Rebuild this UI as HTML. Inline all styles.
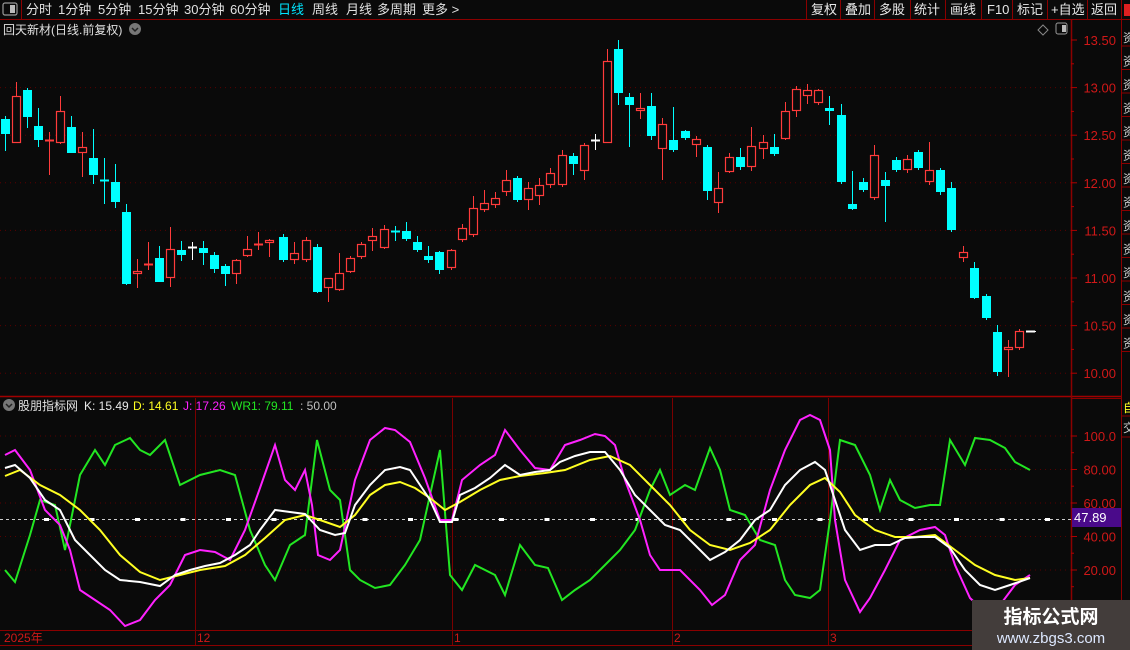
<!DOCTYPE html>
<html><head><meta charset="utf-8"><style>
*{margin:0;padding:0;box-sizing:border-box}
body{width:1130px;height:650px;background:#0a0a0a;overflow:hidden;font-family:"Liberation Sans","Noto Sans CJK SC",sans-serif;position:relative;color:#ddd}
</style></head><body>
<svg id="s" width="1130" height="650" style="position:absolute;left:0;top:0" xmlns="http://www.w3.org/2000/svg" font-family="Liberation Sans, Noto Sans CJK SC, sans-serif"></svg>
<script>
var s=document.getElementById('s'),h='';
function L(x1,y1,x2,y2,c,w,d){h+='<line x1="'+x1+'" y1="'+y1+'" x2="'+x2+'" y2="'+y2+'" stroke="'+c+'" stroke-width="'+(w||1)+'"'+(d?' stroke-dasharray="'+d+'"':'')+'/>';}
function T(x,y,t,c,sz,a){h+='<text x="'+x+'" y="'+y+'" fill="'+c+'" font-size="'+(sz||12)+'"'+(a?' text-anchor="'+a+'"':'')+'>'+t+'</text>';}
L(0,19.5,1130,19.5,'#8b0000');
L(21.5,0,21.5,19,'#8b0000');
[806,840,874,910,945,981,1012,1047,1087,1121].forEach(function(x){L(x+.5,0,x+.5,19,'#8b0000');});
L(0,396.5,1121,396.5,'#a00000',1.5);
L(1071.5,19,1071.5,650,'#8b0000',1.5);
L(1121.5,19,1121.5,650,'#8b0000');
L(1071,398.5,1121,398.5,'#8b0000');
L(0,630.5,1071,630.5,'#8b0000');
L(0,645.5,1071,645.5,'#8b0000');
var pl=['13.50','13.00','12.50','12.00','11.50','11.00','10.50','10.00'];
for(var i=0;i<8;i++){var y=40+i*47.6;if(i>0)L(0,y,1071,y,'#5a0000',1,'1 4');L(1071,y,1077,y,'#b00000');T(1116,y+5,pl[i],'#d01818',13,'end');if(i<7)L(1071,y+23.8,1074,y+23.8,'#b00000');}
var il=['100.0','80.00','60.00','40.00','20.00'];
for(i=0;i<5;i++){var y=436+i*33.5;L(0,y,1071,y,'#5a0000',1,'1 4');L(1071,y,1077,y,'#b00000');T(1116,y+5,il[i],'#d01818',13,'end');L(1071,y+16.7,1074,y+16.7,'#b00000');}
[195,452,672,828].forEach(function(x){L(x+.5,398,x+.5,645,'#7a0000');});
var C=[[5,119,134,116,151,'c'],[16,96,143,82,143,'r'],[27,90,117,88,128,'c'],[38,126,140,108,147,'c'],[49,140,141,132,175,'r'],[60,111,143,96,144,'r'],[71,127,153,116,153,'c'],[82,147,153,132,177,'r'],[93,158,175,129,184,'c'],[104,180,181,158,204,'c'],[115,182,202,164,208,'c'],[126,212,284,204,285,'c'],[137,271,274,259,288,'r'],[148,264,265,242,270,'r'],[159,258,282,246,282,'c'],[170,249,278,227,287,'r'],[181,250,255,241,261,'c'],[192,247,248,242,260,'w'],[203,248,253,241,265,'c'],[214,255,269,252,273,'c'],[225,266,274,264,286,'c'],[236,260,274,259,284,'r'],[247,249,256,236,257,'r'],[258,244,245,232,250,'r'],[269,240,243,239,257,'r'],[283,237,260,234,262,'c'],[294,253,260,242,264,'r'],[306,240,260,237,262,'r'],[317,247,292,244,293,'c'],[328,278,288,278,302,'r'],[339,273,290,253,291,'r'],[350,258,272,256,273,'r'],[361,244,257,242,259,'r'],[372,236,241,228,251,'r'],[384,229,248,225,249,'r'],[395,231,232,226,241,'c'],[406,231,239,222,241,'c'],[417,242,250,236,252,'c'],[428,256,260,246,263,'c'],[439,252,270,251,274,'c'],[451,250,268,249,270,'r'],[462,228,240,224,242,'r'],[473,208,235,196,237,'r'],[484,203,210,190,212,'r'],[495,198,205,192,208,'r'],[506,180,192,170,196,'r'],[517,178,200,176,202,'c'],[528,188,200,182,210,'r'],[539,185,196,178,205,'r'],[550,173,185,168,188,'r'],[562,155,185,150,187,'r'],[573,156,164,153,175,'c'],[584,145,171,143,180,'r'],[595,140,141,134,150,'w'],[607,61,143,49,143,'r'],[618,49,93,40,105,'c'],[629,97,105,93,147,'c'],[640,108,111,93,119,'r'],[651,106,136,93,140,'c'],[662,124,149,118,180,'r'],[673,140,150,107,152,'c'],[685,131,138,130,140,'c'],[696,139,145,136,157,'r'],[707,147,191,145,200,'c'],[718,188,203,172,213,'r'],[729,157,172,153,173,'r'],[740,157,167,148,170,'c'],[751,146,167,127,171,'r'],[763,142,149,135,159,'r'],[774,147,154,134,156,'c'],[785,111,139,102,140,'r'],[796,89,111,86,117,'r'],[807,90,96,84,104,'r'],[818,90,103,89,105,'r'],[829,108,111,96,125,'c'],[841,115,182,104,184,'c'],[852,204,209,171,210,'c'],[863,182,190,178,192,'c'],[874,155,198,145,200,'r'],[885,180,186,172,222,'c'],[896,160,170,157,172,'c'],[907,159,170,155,173,'r'],[918,152,168,150,170,'c'],[929,170,182,142,185,'r'],[940,170,192,168,195,'c'],[951,188,230,182,232,'c'],[963,252,258,246,262,'r'],[974,268,298,262,299,'c'],[986,296,318,294,320,'c'],[997,332,372,325,376,'c'],[1008,347,350,340,377,'r'],[1019,331,348,329,350,'r'],[1030,331,332,331,332,'w']];
C.forEach(function(k){var x=k[0],col=k[5]=='r'?'#ff3b3b':k[5]=='c'?'#00ffff':'#ffffff';
L(x+.5,k[3],x+.5,k[4],col);
if(k[2]-k[1]<=2){L(x-4,k[1]+.5,x+5,k[1]+.5,col,2);}
else if(k[5]=='r')h+='<rect x="'+(x-3.5)+'" y="'+(k[1]+.5)+'" width="8" height="'+(k[2]-k[1]-1)+'" fill="#0a0a0a" stroke="'+col+'" stroke-width="1.2"/>';
else h+='<rect x="'+(x-4)+'" y="'+k[1]+'" width="9" height="'+(k[2]-k[1])+'" fill="'+col+'"/>';});
L(1030,331.5,1036,331.5,'#fff');
L(0,519.5,1071,519.5,'#ccc',1,'3 3');
for(var x=46;x<1071;x+=45.5)h+='<rect x="'+(x-2)+'" y="518" width="5" height="3" fill="#fff"/>';
function P(pts,c){h+='<polyline fill="none" stroke="'+c+'" stroke-width="2" points="'+pts+'"/>';}
P('5,570 15,582 30,535 40,500 55,505 65,550 80,475 95,450 105,465 115,445 130,438 140,450 150,455 165,440 180,485 200,475 220,470 235,475 250,530 265,565 275,580 290,545 305,535 317,440 330,490 340,500 350,570 360,580 375,588 390,585 405,565 420,540 440,450 450,575 462,590 475,565 495,575 505,595 520,545 535,565 548,568 562,600 575,590 590,580 605,565 620,550 635,530 650,490 660,470 670,495 685,485 695,490 710,448 720,470 730,510 745,515 760,540 775,545 785,580 795,595 810,598 820,590 830,520 840,440 855,445 870,475 880,510 890,480 900,500 915,508 930,505 940,505 950,440 965,465 975,438 990,440 1005,448 1015,462 1030,470','#22e622');
P('5,455 15,450 30,470 45,510 60,525 70,550 80,590 95,600 110,610 125,626 140,620 155,600 170,585 185,555 200,550 215,552 230,560 245,530 260,488 275,445 285,480 295,490 305,470 312,505 318,555 330,560 340,550 355,480 370,440 385,428 395,430 410,442 425,478 440,520 452,520 462,480 480,465 495,455 505,430 520,450 535,468 550,470 565,445 580,440 595,434 605,436 615,445 625,480 640,520 650,555 660,570 680,570 700,590 712,605 725,595 740,560 755,545 770,490 785,450 800,420 810,415 820,420 830,450 835,520 845,580 860,612 870,598 885,570 900,540 920,530 935,527 945,535 955,565 970,598 985,612 1000,605 1015,585 1030,575','#ff22ff');
P('5,476 20,470 40,485 60,495 80,510 100,530 120,555 140,572 160,580 180,575 200,570 225,566 245,555 265,538 285,520 305,515 320,520 340,527 355,515 370,495 385,485 400,482 415,488 430,498 445,510 460,502 480,490 500,480 520,476 545,473 565,470 590,460 610,456 630,465 650,485 670,505 690,530 710,545 730,550 750,543 770,530 790,505 810,485 825,478 840,492 855,515 875,530 895,537 915,537 935,535 955,550 975,565 995,575 1015,580 1030,578','#ffff22');
P('5,468 15,465 30,478 45,500 60,510 75,540 90,555 105,570 120,580 140,582 160,586 175,575 190,570 205,566 220,563 235,555 250,545 260,530 275,510 290,512 305,514 320,530 335,535 345,533 355,505 370,485 385,470 400,467 410,470 420,485 430,500 440,522 452,522 460,495 475,488 490,478 505,465 520,475 535,472 550,470 560,462 575,456 590,452 605,452 620,470 635,495 650,510 665,525 680,530 695,545 710,560 725,552 740,540 755,520 770,510 785,485 800,470 815,462 825,470 835,500 845,530 860,550 875,545 890,545 905,538 920,537 935,537 950,548 965,570 980,585 995,590 1010,585 1030,578','#ffffff');
h+='<rect x="1072" y="508" width="49" height="19" fill="#4a0a8a"/>';T(1074,522,'47.89','#fff',13);
T(4,642,'2025年','#d01818',12);T(197,642,'12','#d01818',12);T(454,642,'1','#d01818',12);T(674,642,'2','#d01818',12);T(830,642,'3','#d01818',12);
h+='<rect x="3" y="3" width="14" height="12" rx="2" fill="none" stroke="#999" stroke-width="1.2"/><rect x="10" y="5" width="5" height="8" fill="#bbb"/>';
var tabs=[[26,'分时'],[58,'1分钟'],[98,'5分钟'],[138,'15分钟'],[184,'30分钟'],[230,'60分钟'],[278,'日线'],[312,'周线'],[346,'月线'],[377,'多周期'],[422,'更多 >']];
tabs.forEach(function(t){T(t[0],14,t[1],t[1]=='日线'?'#00e5ff':'#e0e0e0',13);});
var rt=[[811,'复权'],[845,'叠加'],[879,'多股'],[914,'统计'],[950,'画线'],[987,'F10'],[1017,'标记'],[1051,'+自选'],[1091,'返回']];
rt.forEach(function(t){T(t[0],14,t[1],'#e8e8e8',13);});
h+='<rect x="1124" y="4" width="6" height="12" fill="#e02020"/>';
T(3,34,'回天新材(日线.前复权)','#e0e0e0',12);
h+='<circle cx="135" cy="29" r="6" fill="#777"/><path d="M132,28 l3,3 l3,-3" stroke="#222" stroke-width="1.5" fill="none"/>';
h+='<path d="M1043,25 l5,5 l-5,5 l-5,-5z" stroke="#888" fill="none"/><rect x="1056" y="23" width="11" height="11" rx="2" fill="none" stroke="#999"/><rect x="1062" y="25" width="4" height="7" fill="#bbb"/>';
h+='<circle cx="9" cy="405" r="6" fill="#777"/><path d="M6,404 l3,3 l3,-3" stroke="#222" stroke-width="1.5" fill="none"/>';
T(18,410,'股朋指标网','#e0e0e0',12);T(84,410,'K: 15.49','#e8e8e8',12);T(133,410,'D: 14.61','#ffff22',12);T(183,410,'J: 17.26','#ff22ff',12);T(231,410,'WR1: 79.11','#22e622',12);T(300,410,': 50.00','#c0c0c0',12);
for(i=0;i<14;i++){var y=34+i*23.5;L(1122,y+12,1130,y+12,'#8b0000');T(1123,y+8,'资','#ccc',12);}
T(1123,412,'自','#ffff22',12);L(1122,416,1130,416,'#8b0000');T(1123,432,'交','#ccc',12);L(1122,437,1130,437,'#8b0000');
h+='<rect x="972" y="600" width="158" height="50" fill="#433d3b"/>';
h+='<text x="1051" y="623" fill="#fff" font-size="19" font-weight="bold" text-anchor="middle" font-family="Noto Sans CJK SC, sans-serif">指标公式网</text>';
h+='<text x="1051" y="643" fill="#dde8ff" font-size="15" text-anchor="middle">www.zbgs3.com</text>';
s.innerHTML=h;
</script>
</body></html>
